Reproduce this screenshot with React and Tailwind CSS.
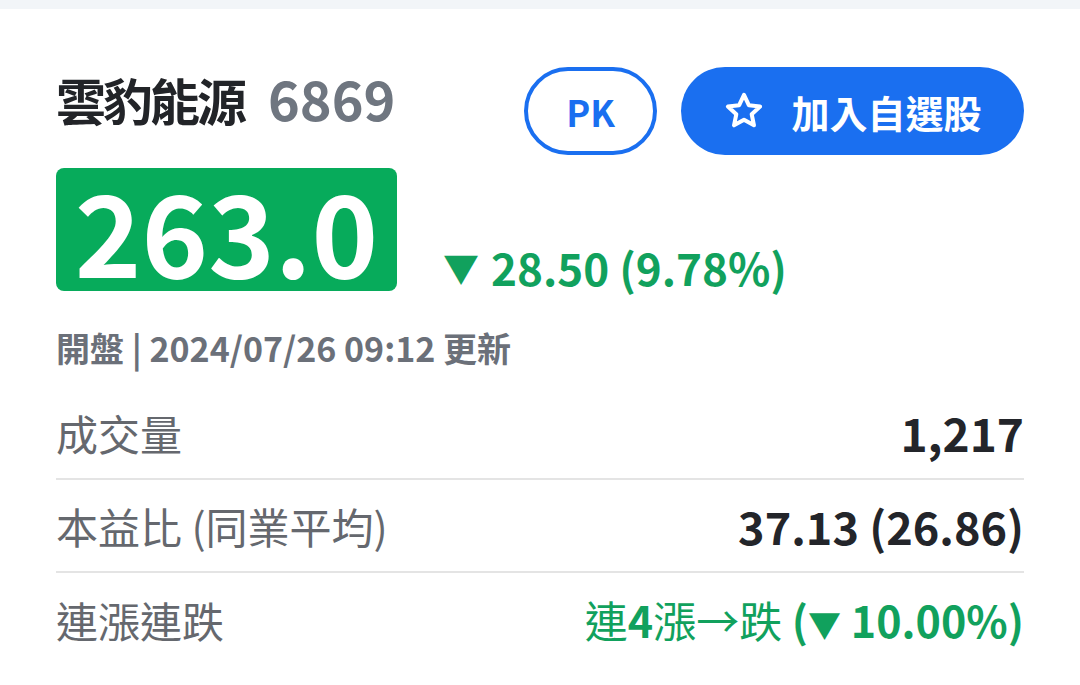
import React from "react";

const F = { fontFamily: '"Noto Sans CJK TC", "Noto Sans", sans-serif' };

function Star() {
  return (
    <svg width="42" height="42" viewBox="0 0 24 24" fill="none" stroke="white" strokeWidth="2.3" strokeLinejoin="round">
      <path d="M12 2.8l2.75 5.9 6.45.75-4.8 4.4 1.3 6.35L12 17l-5.7 3.2 1.3-6.35-4.8-4.4 6.45-.75z" />
    </svg>
  );
}

export default function App() {
  return (
    <div className="w-[1080px] h-[685px] bg-white overflow-hidden" style={F}>
      <div className="h-[9px] bg-[#f2f5f8]" />
      <div className="px-[56px]">
        <div className="flex items-start justify-between pt-[58px]">
          <div className="flex items-baseline gap-[24px] mt-[4px]">
            <span className="text-[50px] leading-none font-bold text-[#222428] tracking-[-3px]">雲豹能源</span>
            <span className="text-[54px] leading-none font-bold text-[#6f7680]">6869</span>
          </div>
          <div className="flex gap-[24px]">
            <div className="w-[133px] h-[88px] rounded-full border-[4px] border-[#1a6ff0] flex items-center justify-center text-[#1a6ff0] text-[36px] font-bold">
              PK
            </div>
            <div className="w-[343px] h-[88px] rounded-full bg-[#1a6ff0] flex items-center justify-center gap-[26px] text-white text-[38px] font-bold">
              <Star />
              <span>加入自選股</span>
            </div>
          </div>
        </div>
        <div className="flex items-end mt-[13px]">
          <div className="w-[341px] h-[123px] rounded-[8px] bg-[#07ab5b] flex items-center justify-center">
            <span className="text-[113px] leading-none font-bold text-white">263.0</span>
          </div>
          <div className="flex items-center ml-[46px] mb-[2px] text-[#11a15d] font-bold text-[44px] leading-none">
            <span className="text-[36px] mr-[12px]">▼</span>
            <span>28.50 (9.78%)</span>
          </div>
        </div>
        <div className="mt-[40px] text-[34px] font-bold text-[#6b7079] leading-none">開盤 | 2024/07/26 09:12 更新</div>
        <div className="mt-[21px]">
          <div className="h-[94px] flex items-center justify-between border-b-2 border-[#e4e4e4]">
            <span className="text-[42px] text-[#65686e]">成交量</span>
            <span className="text-[46px] font-bold text-[#23252a]">1,217</span>
          </div>
          <div className="h-[93px] flex items-center justify-between border-b-2 border-[#e4e4e4]">
            <span className="text-[42px] text-[#65686e]">本益比 (同業平均)</span>
            <span className="text-[45px] font-bold text-[#23252a]">37.13 (26.86)</span>
          </div>
          <div className="h-[93px] flex items-center justify-between">
            <span className="text-[42px] text-[#65686e]">連漲連跌</span>
            <span className="text-[43px] text-[#11a15d]">連<b>4</b>漲→跌 <b>(<span className="text-[33px]">▼</span> 10.00%)</b></span>
          </div>
        </div>
      </div>
    </div>
  );
}
